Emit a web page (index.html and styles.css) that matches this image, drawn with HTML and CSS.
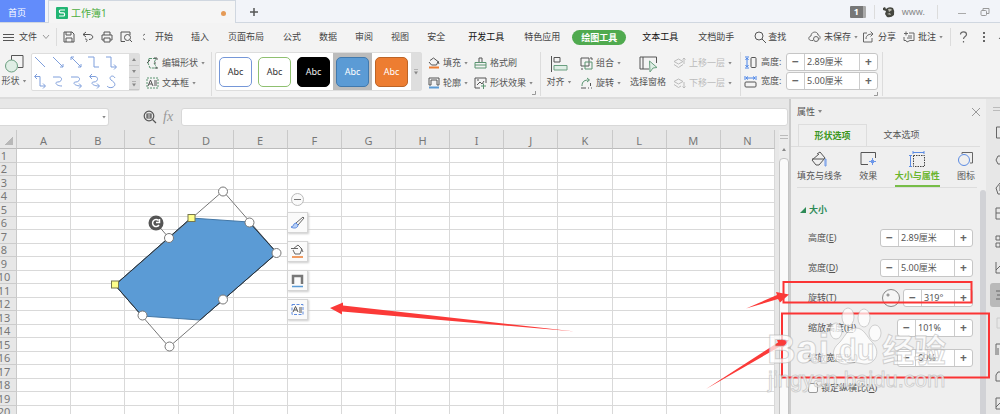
FILE: index.html
```
<!DOCTYPE html>
<html lang="zh-CN">
<head>
<meta charset="utf-8">
<title>工作簿1</title>
<link rel="stylesheet" href="styles.css">
</head>
<body>
<div class="app">
  <header class="titlebar">
    <button class="home-tab">首页</button>
    <div class="doc-tab">
      <svg class="logo" width="12" height="12" viewBox="0 0 12 12"><rect width="12" height="12" rx="1" fill="#22b573"/><path d="M9 3H4.6C3 3 3 5.8 4.6 5.8H7.4C9 5.8 9 9 7.4 9H3" fill="none" stroke="#fff" stroke-width="1.2"/></svg>
      <span>工作簿1</span><i class="dirty"></i>
    </div>
    <button class="new-tab" aria-label="新建"><svg width="10" height="10"><path d="M5 1V9M1 5H9" stroke="#555" stroke-width="1.5"/></svg></button>
    <div class="window-tools">
      <span class="count">1</span><i class="vline"></i>
      <svg width="12" height="12" viewBox="0 0 12 12"><path d="M0 2L2 1L3 3Q6 0 10 2Q12 5 11 9Q8 12 4 11L2 8L3 5L0 4Z" fill="#45463f"/><path d="M5 3Q8 2 9 4L6 6ZM4 8L7 7L8 9Z" fill="#b9b8ae"/></svg>
      <span class="user">www.</span><i class="vline"></i>
      <button aria-label="最小化"><svg width="8" height="10"><path d="M0 6.500H8" stroke="#aaa"/></svg></button>
      <button aria-label="还原"><svg width="10" height="10" fill="none" stroke="#999"><rect x="1" y="3.500" width="5.500" height="5" rx="1"/><path d="M3 3V1.500H9V6.500H7"/></svg></button>
    </div>
  </header>

  <nav class="menu">
    <button class="file"><svg width="11" height="9" stroke="#555"><path d="M0 1.500H11M0 4.500H11M0 7.500H11"/></svg>文件<svg width="8" height="6" fill="none" stroke="#999"><path d="M1 1L4 4.500L7 1"/></svg></button>
    <i class="vline"></i>
    <div class="quick">
      <button aria-label="保存"><svg width="12" height="12" fill="none" stroke="#555"><path d="M1 1H9L11 3V11H1ZM3 1V4H8V1M3 11V7H9V11"/></svg></button>
      <button aria-label="输出"><svg width="12" height="12" fill="none" stroke="#555"><path d="M1 3.500H7C12 3.500 12 8.500 7 8.500M4 1L1 3.500L4 6M4 11C6 9 5 8 3 8"/></svg></button>
      <button aria-label="打印"><svg width="12" height="12" fill="none" stroke="#555"><path d="M3 4V1H9V4M3 9H1V4H11V9H9M3 7H9V11H3Z"/></svg></button>
      <button aria-label="预览"><svg width="13" height="12" fill="none" stroke="#555"><path d="M5 10.500H1V1H10V4M10 9L12 11"/><circle cx="7.500" cy="6.500" r="3"/></svg></button>
    </div>
    <svg class="more" width="4" height="8" fill="none" stroke="#666"><path d="M3 1L1 2.500M3 7L1 5.500"/></svg>
    <div class="tabs">
      <a href="#">开始</a><a href="#">插入</a><a href="#" class="wide">页面布局</a><a href="#">公式</a><a href="#">数据</a><a href="#">审阅</a><a href="#">视图</a><a href="#">安全</a><a href="#" class="strong">开发工具</a><a href="#" class="wide">特色应用</a><a href="#" class="pill">绘图工具</a><a href="#" class="strong">文本工具</a><a href="#" class="wide">文档助手</a>
    </div>
    <button class="find"><svg width="12" height="12" fill="none" stroke="#555"><circle cx="5" cy="5" r="4"/><path d="M8 8L12 12"/></svg>查找</button>
    <div class="menu-right">
      <button><svg width="13" height="12" fill="none" stroke="#666"><path d="M5 9.500H3.500C0 9.500 0 5.500 3 5C3 0 10 0 10 4C12 4.500 13 7 11 8.500"/><circle cx="8" cy="8" r="2.500"/></svg>未保存<b class="caret"></b></button>
      <button><svg width="13" height="12" fill="none" stroke="#666"><path d="M5 2H1.500V11H10V7M4 8C4 4 7 3 11 3M8.500 0.500L11 3L8.500 5.500"/></svg>分享</button>
      <button><svg width="12" height="12" fill="none" stroke="#666"><path d="M6 2H11V9.500H7L4 11L3 9.500H1V6M4 7H9M5 5H9M1 2.500H5M3 .5V4.500"/></svg>批注<b class="caret"></b></button>
      <i class="vline"></i>
      <button aria-label="帮助"><svg width="9" height="12" fill="none" stroke="#666" stroke-width="1.200"><path d="M1.500 3.500C1.500 0 7.500 0 7.500 3.500C7.500 5.500 4.500 5.500 4.500 8M4.500 10V11.500"/></svg></button>
      <button aria-label="更多"><svg width="3" height="10" fill="#666"><path d="M0 0H2V2H0ZM0 4H2V6H0ZM0 8H2V10H0Z"/></svg></button>
      <button aria-label="收起"><svg width="8" height="6" fill="none" stroke="#666"><path d="M1 5L4.500 1L8 5"/></svg></button>
    </div>
  </nav>

  <section class="ribbon">
    <button class="tall shape-btn"><svg width="20" height="20" fill="none" stroke="#555"><path d="M7.500 7V1.500H19V13.500H14"/><circle cx="7.500" cy="12" r="6" fill="#dfeee5" stroke="#6a9f80"/></svg><span>形状<b class="caret"></b></span></button>
    <div class="lines">
      <svg width="96" height="36" fill="none" stroke="#7f9fdc"><path d="M3 3L13 13M21 3L31 13M28 13H31V10M39 3L49 13M39 6V3H42M46 13H49V10M56 3H62V13H67M74 3H79V13H84M82 10.500L84.500 13L82 15.500M5 20L2.500 22.500L5 25M3 22.500H8V32H13M11 29.500L13.500 32L11 34.500M21 23H27C31 23 30 28 26 28C22 28 24 32 30 32M39 23H45C49 23 48 28 44 28C40 28 42 32 49 32M47 29.500L49.500 32L47 34.500M60 20L57.500 22.500L60 25M58 22.500H63C67 23 66 28 62 28C58 28 60 32 67 32M65 29.500L67.500 32L65 34.500M83 24C81 20 76 23 79 26C84 29 84 32 80 33.500C77 34 76 33 75 32"/></svg>
      <div class="strip three"><i><b class="up"></b></i><i><b class="caret"></b></i><i><b class="caret lined"></b></i></div>
    </div>
    <div class="stack edit">
      <button><svg width="13" height="12" fill="none" stroke="#5a9470"><path d="M3 1.500H10L8 6L11 11H4L2 6Z" stroke-dasharray="3 1"/><path d="M1 6L4 3M8 1H11V3M8 6H10M9 11H12" stroke="#555"/></svg>编辑形状<b class="caret"></b></button>
      <button><svg width="13" height="12" fill="none" stroke="#5a9470"><rect x="1" y="1" width="11" height="10" stroke-dasharray="2 1"/><path d="M2 9L4.500 3L7 9M3 7H6M8 4H11M8 6H11M8 8H11" stroke="#555"/></svg>文本框<b class="caret"></b></button>
    </div>
    <i class="vline"></i>
    <div class="styles">
      <div class="cell"><button class="sw s1">Abc</button></div><div class="cell"><button class="sw s2">Abc</button></div><div class="cell"><button class="sw s3">Abc</button></div><div class="cell on"><button class="sw s4">Abc</button></div><div class="cell"><button class="sw s5">Abc</button></div>
      <div class="strip"><b class="caret lined"></b></div>
    </div>
    <div class="stack fill">
      <button><svg width="12" height="12" fill="none" stroke="#555"><path d="M2 3.500L5.500 1L10 4.500L8.500 8H3.500L1 5M10 4L11 7"/><path d="M1 10.500H11" stroke="#ed7d31" stroke-width="2"/></svg>填充<b class="caret"></b></button>
      <button><svg width="12" height="12" fill="none" stroke="#555"><path d="M1 8V1H11V8M3 8V3H9V8M1 8H3M9 8H11"/><path d="M1 10.500H11" stroke="#5b9bd5" stroke-width="2"/></svg>轮廓<b class="caret"></b></button>
    </div>
    <div class="stack effects">
      <button><svg width="13" height="12" fill="none" stroke="#5a9470"><path d="M5 5V1H8V5" stroke="#555"/><path d="M1 5.500H12V11H1ZM1 8H12"/></svg>格式刷</button>
      <button><svg width="13" height="12" fill="none" stroke="#555"><path d="M6 11H1V1H12V6M3 3H5M3 8L6 5L8 7L10 4"/><path d="M7 9H12M9.500 6.500V12" stroke="#5a9470"/></svg>形状效果<b class="caret"></b></button>
    </div>
    <svg class="corner" width="4" height="4"><path d="M0 3.500H3.500V0" fill="none" stroke="#999"/></svg>
    <i class="vline"></i>
    <button class="tall align"><svg width="18" height="18" fill="none" stroke="#555"><path d="M1.500 1V17M4 2.500H10V7H4Z"/><path d="M4 10.500H17V15H4Z" stroke="#6a9f80" fill="#dfeee5"/></svg><span>对齐<b class="caret"></b></span></button>
    <div class="stack group">
      <button><svg width="13" height="13" fill="none" stroke="#555"><path d="M1 1H9V9H1Z"/><path d="M5 5H12V12H5Z" stroke="#5a9470"/><path d="M1 12H3M10 1H12V3"/></svg>组合<b class="caret"></b></button>
      <button><svg width="13" height="13" fill="none" stroke="#5a9470"><path d="M2 9C2 4 5 3 9 3M7 1L9.500 3L7 5"/><path d="M1 11H6M8 11H9M11 11H12M10.500 6V9" stroke="#555"/></svg>旋转<b class="caret"></b></button>
    </div>
    <button class="tall select"><svg width="19" height="18" fill="none" stroke="#555"><path d="M10 14H1V2H17.500V8M4 2V14"/><path d="M10.500 6L18 12.500L14 13L11 17Z" stroke="#6a9f80" fill="#dfeee5"/></svg><span>选择窗格</span></button>
    <div class="stack order">
      <button disabled><svg width="13" height="12" fill="none" stroke="#bbb"><path d="M1 4.500L5.500 2L10 4.500L5.500 7ZM1 7.500L5.500 10.500L10 7.500M11 1V7M9.500 2.500L11 1L12.500 2.500"/></svg>上移一层<b class="caret"></b></button>
      <button disabled><svg width="13" height="12" fill="none" stroke="#bbb"><path d="M1 4.500L5.500 2L10 4.500L5.500 7ZM1 7.500L5.500 10.500L8 9M11 5V11M9.500 9.500L11 11L12.500 9.500"/></svg>下移一层<b class="caret"></b></button>
    </div>
    <i class="vline"></i>
    <div class="sizes">
      <label for="rh"><svg width="13" height="13" fill="none" stroke="#4a84e8"><path d="M1 1H5M1 12H5M3 2V11M1.500 4L3 2L4.500 4M1.500 9L3 11L4.500 9"/><rect x="7" y="1.500" width="5" height="10" rx="1" stroke="#555"/></svg>高度:</label>
      <div class="stepper"><button>−</button><input id="rh" value="2.89厘米"><button>+</button></div>
      <label for="rw"><svg width="13" height="13" fill="none" stroke="#4a84e8"><path d="M1 1V5M12 1V5M2 3H11M4 1.500L2 3L4 4.500M9 1.500L11 3L9 4.500"/><rect x="1" y="7" width="11" height="5" rx="1" stroke="#555"/></svg>宽度:</label>
      <div class="stepper"><button>−</button><input id="rw" value="5.00厘米"><button>+</button></div>
      <svg class="size-corner" width="4" height="4"><path d="M0 3.500H3.500V0" fill="none" stroke="#999"/></svg>
    </div>
    <i class="vline"></i>
  </section>

  <main class="work">
    <section class="book">
      <div class="formula">
        <div class="name"><input aria-label="名称框"><b class="caret"></b></div>
        <svg width="14" height="14" fill="none" stroke="#555" stroke-width="1.200"><circle cx="6" cy="6" r="4.800"/><path d="M9.500 9.500L13 13M4 4H8V8H4ZM4 6H8"/></svg>
        <i class="fx">fx</i>
        <input class="entry" aria-label="编辑栏">
      </div>
      <div class="sheet-wrap">
        <table class="sheet">
          <thead><tr id="heads"><th class="all"></th></tr></thead>
          <tbody id="rows"></tbody>
        </table>
        <div class="vscroll"><i class="split"></i><b class="up"></b><i class="thumb"></i></div>
      </div>
      <svg class="drawing" width="789" height="315" viewBox="0 99 789 315">
        <polygon points="191,218 249,222 277,253 200,320 142,316 115,285" fill="#5b9bd5" stroke="#4377a6"/>
        <path d="M223 191L277 253L169 347L115 285ZM156 223L169 238" fill="none" stroke="#777"/>
        <path d="M191 218L115 285L142 316M249 222L277 253L200 320" fill="none" stroke="#23313e"/>
        <g fill="#fff" stroke="#777"><circle cx="223" cy="191.500" r="4.500"/><circle cx="249.500" cy="222.500" r="4.500"/><circle cx="276.500" cy="253" r="4.500"/><circle cx="223" cy="299.500" r="4.500"/><circle cx="169.500" cy="346.500" r="4.500"/><circle cx="142.500" cy="315.500" r="4.500"/><circle cx="169" cy="238" r="4.500"/></g>
        <g fill="#ffff8c" stroke="#77774d"><rect x="188" y="214.500" width="7" height="7"/><rect x="111.500" y="281" width="7" height="7"/></g>
        <circle cx="156" cy="223" r="7.500" fill="#555"/><path d="M158.500 220.500A3.500 3.500 0 1 0 159 225M159.500 219V222.500H156" fill="none" stroke="#fff" stroke-width="1.500"/>
        <path d="M330 308L343 302.500V305.500L575 331.500L342 311.500V314.500Z" fill="#fb3a38"/>
      </svg>
      <div class="float">
        <button class="round" aria-label="收起"><svg width="7" height="3"><path d="M0 1.500H7" stroke="#777"/></svg></button>
        <button aria-label="样式"><svg width="15" height="15" fill="none"><path d="M6 8L13 2L14 3L8 10Z" stroke="#666"/><path d="M6 8C3 8 4 12 1 12C4 14 8 13 8 10Z" fill="#b9d0f5" stroke="#5c8be0"/></svg></button>
        <button aria-label="填充"><svg width="15" height="15" fill="none" stroke="#666"><path d="M1 4.500H8M3 5L8 1L12 5L10 10H5L3 6M11 4L13 8"/><path d="M2 13H13" stroke="#ed7d31" stroke-width="1.500"/></svg></button>
        <button aria-label="轮廓"><svg width="15" height="15" fill="none"><path d="M3 11V3H12V11" stroke="#777" stroke-width="2.500"/><path d="M2 13.500H13" stroke="#5b9bd5" stroke-width="1.500"/></svg></button>
        <button aria-label="文字"><svg width="15" height="15" fill="none" stroke="#5c8be0"><rect x="2" y="2.500" width="11" height="10" stroke-dasharray="3 1.500"/><path d="M3 10L5.500 4.500L8 10M4 8H7M9 6H12M9 8H12M9 10H12" stroke="#555"/></svg></button>
      </div>
    </section>

    <aside class="panel">
      <div class="panel-title"><span>属性<b class="caret"></b></span><button aria-label="关闭"><svg width="8" height="8" stroke="#999"><path d="M0 0L8 8M8 0L0 8"/></svg></button></div>
      <div class="panel-tabs"><button class="on">形状选项</button><button>文本选项</button></div>
      <div class="kinds">
        <button><svg width="17" height="17" fill="none" stroke="#555"><path d="M6 3L9 1L14 7L8 14H5L1 9L8 3M1 8H13"/><path d="M14 8H15V15H14Z" stroke="#6d97e8"/></svg>填充与线条</button>
        <button><svg width="17" height="17" fill="none" stroke="#555"><path d="M8 13.500H1V1.500H15.500V7"/><path d="M12.500 7V14M9 10.500H16M11 9L14 12M14 9L11 12" stroke="#6d97e8"/></svg>效果</button>
        <button class="on"><svg width="17" height="17" fill="none" stroke="#5b8be3"><path d="M4 1.500H15M4 0V3M15 0V3M1.500 4V15M0 4.500H3M0 15.500H3"/><rect x="4.500" y="4.500" width="11" height="11" stroke="#444" stroke-dasharray="1.500 1"/></svg>大小与属性</button>
        <button><svg width="17" height="17" fill="none"><path d="M5 3V1.500H15.500V12H13" stroke="#666"/><circle cx="7" cy="9" r="5.500" stroke="#5b8be3"/></svg>图标</button>
      </div>
      <h2><svg width="6" height="6"><path d="M6 0V6H0Z" fill="#2e8b57"/></svg>大小</h2>
      <div class="row"><label for="ph">高度(<u>E</u>)</label><div class="stepper"><button>−</button><input id="ph" value="2.89厘米"><button>+</button></div></div>
      <div class="row"><label for="pw">宽度(<u>D</u>)</label><div class="stepper"><button>−</button><input id="pw" value="5.00厘米"><button>+</button></div></div>
      <div class="row"><label for="pr">旋转(<u>T</u>)</label><i class="dial"></i><div class="stepper turn"><button>−</button><input id="pr" value="319°"><button>+</button></div></div>
      <div class="row"><label for="sh">缩放高度(<u>H</u>)</label><div class="stepper scale"><button>−</button><input id="sh" value="101%"><button>+</button></div></div>
      <div class="row"><label for="sw">缩放宽度(<u>W</u>)</label><div class="stepper scale"><button>−</button><input id="sw" value="69%"><button>+</button></div></div>
      <div class="row check"><input type="checkbox" id="lock"><label for="lock">锁定纵横比(<u>A</u>)</label></div>
      <i class="pscroll"></i>
    </aside>
    <aside class="dock">
      <svg width="14" height="315" viewBox="0 0 14 315" fill="none" stroke="#777"><path d="M7 8.500H14M7 11.500H14" stroke="#bbb"/><rect x="4" y="184" width="14" height="24" rx="3" fill="#b9b9b9" stroke="none"/><path d="M14 28H10.500V39H14M14 57H12L10 61L12 65H14M14 84L10 89L12 95H14M14 86V92M10 109H14M10 120H14M10 109V120M10 114H14M10 137H14V141H10ZM10 144H14V148H10ZM10 163V174H14M10 171L14 167M10 192H14M10 200H14M11 196H14M10 245H14M10 245V256M12 249V256M14 273H12L10 276V282H14M10 299H14M10 299V310H14M10 308L14 304" stroke="#666"/><path d="M11 219H14M11 219V229H14" stroke="#ccc"/></svg>
    </aside>
    <svg class="notes" width="330" height="315" viewBox="670 99 330 315">
      <rect x="783.500" y="282" width="188" height="20.500" fill="none" stroke="#fb3434" stroke-width="2"/>
      <rect x="782" y="313.500" width="207" height="64" fill="none" stroke="#fb3434" stroke-width="2"/>
      <g fill="#fb3a38"><path d="M746 308.500L777 295L776 292L789 294.500L780 302.500L778 299Z"/><path d="M706 389L778 342.500L777 340L789 340L782 349L780 346.500Z"/></g>
      <g class="mark">
        <text x="767" y="363" class="brand">Bai</text>
        <ellipse cx="836" cy="331" rx="6" ry="8"/><ellipse cx="848" cy="317" rx="6" ry="9"/><ellipse cx="864" cy="318" rx="6" ry="9"/><ellipse cx="875" cy="333" rx="6" ry="8"/>
        <path d="M856 328C864 328 867 337 872 342C882 352 875 365 864 364Q855 361 847 364C834 365 829 352 838 344C844 339 847 328 856 328Z"/>
        <text x="839" y="360" class="du">du</text>
        <text x="882" y="362" class="cn">经验</text>
        <text x="768" y="387" class="site">jingyan.baidu.com</text>
      </g>
    </svg>
  </main>
</div>
<script src="sheet.js"></script>
</body>
</html>
```
FILE: styles.css
```
* { box-sizing: border-box; }
body { margin: 0; background: #f3f3f3; color: #555; font: 9px/12px "Noto Sans", "Noto Sans CJK SC", sans-serif; overflow: hidden; }
button, input { font: inherit; color: inherit; border: 0; background: none; padding: 0; margin: 0; min-width: 0; white-space: nowrap; }
button { display: flex; align-items: center; justify-content: center; }
a { color: inherit; text-decoration: none; }
svg { flex: none; display: block; }
.app { display: flex; flex-direction: column; height: 100vh; }
.vline { flex: none; width: 1px; align-self: stretch; background: #dcdcdc; }
.caret { flex: none; width: 4px; height: 3px; background: #888; clip-path: polygon(0 0, 100% 0, 50% 100%); display: inline-block; }
.up { width: 4px; height: 3px; background: #888; clip-path: polygon(50% 0, 100% 100%, 0 100%); }
.caret.lined { height: 6px; clip-path: polygon(0 0, 100% 0, 100% 16%, 0 16%, 0 50%, 100% 50%, 50% 100%, 0 50%); }

.titlebar { display: flex; flex: none; height: 23px; background: #f2f4f9; border-bottom: 1px solid #d0d7e0; }
.home-tab { width: 45px; background: #628cfb; color: #fff; padding: 3px 11px 0 0; }
.doc-tab { display: flex; align-items: center; width: 188px; height: 23px; margin-left: 3px; padding: 2px 9px 0 7px; gap: 3px; color: #4ead42; background: #f5f5f5; border: 1px solid #d0d7e0; border-bottom: 0; font-size: 10px; }
.dirty { width: 5px; height: 5px; border-radius: 50%; background: #e59a56; margin-left: auto; }
.new-tab { width: 35px; padding-top: 2px; }
.window-tools { display: flex; align-items: center; margin-left: auto; padding: 2px 10px 0 0; color: #888; }
.window-tools .vline { margin: 3px 8px; }
.window-tools .user { margin-left: 7px; font-size: 9px; }
.window-tools .vline:nth-of-type(2) { margin: 3px 20px 3px 12px; }
.window-tools button + button { margin-left: 14px; }
.count { width: 16px; background: #777; color: #fff; border-radius: 1px; text-align: center; font-weight: bold; border-right: 3px solid #aaa; }

.menu { display: flex; flex: none; align-items: center; height: 28px; padding-left: 3px; color: #444; }
.menu .vline { margin: 5px 0; }
.file { gap: 5px; margin-right: 6px; }
.quick { display: flex; gap: 7px; margin: 0 9px 0 6px; }
.tabs { display: flex; align-items: center; }
.tabs a { padding: 0 9px; }
.tabs .strong { color: #111; padding: 0 10px; margin-left: 4px; }
.tabs .wide { padding: 0 10px; }
.tabs .pill { background: #50aa4f; color: #fff; font-weight: bold; border-radius: 8px; line-height: 15px; margin: 0 2px; }
.find { gap: 2px; margin-left: 10px; }
.menu-right { display: flex; align-items: center; align-self: stretch; margin-left: auto; }
.menu-right button { gap: 3px; margin-right: 7px; }
.menu-right button:first-child { margin-right: 4px; }
.menu-right .vline + button { margin: 0 15px 0 8px; }
.menu-right button:last-child { margin: 0 -6px 0 5px; }

.ribbon { display: flex; flex: none; height: 48px; padding: 1px 0; color: #555; border-bottom: 2px solid #dcdcdc; }
.tall { flex-direction: column; justify-content: flex-start; padding-top: 3px; gap: 3px; }
.tall span { display: flex; align-items: center; gap: 3px; }
.shape-btn { width: 28px; padding-top: 2px; gap: 1px; }
.lines, .styles { display: flex; border: 1px solid #ddd; border-radius: 2px; background: #fff; }
.lines { width: 109px; height: 38px; margin: 1px 6px 0 3px; }
.strip { width: 10px; margin-left: auto; background: #dedede; display: flex; flex-direction: column; align-items: center; justify-content: center; }
.strip i { flex: 1; width: 10px; display: flex; align-items: center; justify-content: center; border-bottom: 1px solid #c8c8c8; }
.stack { display: flex; flex-direction: column; gap: 4px; padding-top: 3px; align-items: flex-start; }
.stack button { height: 16px; gap: 3px; }
.stack button:disabled { color: #bbb; }
.edit { width: 65px; }
.styles { width: 207px; height: 39px; margin: 0 6px 0 3px; }
.cell { width: 39px; padding: 4px 3px; }
.cell.on { background: #bcbcbc; }
.sw { width: 33px; height: 30px; border-radius: 5px; border: 1px solid; color: #333; background: #fff; }
.s1 { border-color: #7597d8; } .s2 { border-color: #8fc070; }
.s3 { background: #000; border-color: #000; color: #eee; }
.s4 { background: #5b9bd5; border-color: #4179ad; color: #fff; }
.s5 { background: #ed7d31; border-color: #bc6427; color: #fff; }
.fill { width: 46px; }
.effects { width: 58px; }
.corner { align-self: flex-end; margin: 0 4px 20px 0; }
.ribbon .corner { margin-bottom: 1px; }
.align { width: 24px; margin: 0 9px 0 6px; }
.group { width: 49px; }
.select { width: 38px; }
.order { margin: 0 8px 0 6px; }
.sizes { display: grid; grid-template-columns: 38px 92px; gap: 1px 4px; align-content: start; padding: 1px 4px 0 3px; }
.sizes label { display: flex; align-items: center; gap: 4px; }
.size-corner { grid-column: 2; justify-self: end; margin-top: 1px; }
.stepper { display: flex; width: 93px; height: 18px; background: #fff; border: 1px solid #c6c6c6; border-radius: 3px; }
.sizes .stepper { width: 92px; }
.stepper button { flex: none; width: 17px; font-size: 12px; font-weight: bold; color: #666; }
.stepper input { flex: 1; width: 0; border: solid #ccc; border-width: 0 1px; padding-left: 2px; font-size: 9px; outline: 0; }

.work { display: flex; flex: 1; min-height: 0; position: relative; background: #e7e7e7; overflow: hidden; }
.book { flex: 1; min-width: 0; position: relative; overflow: hidden; }
.formula { display: flex; align-items: center; padding: 9px 1px 4px 0; }
.name { display: flex; align-items: center; width: 109px; height: 18px; margin-right: 34px; padding-right: 2px; background: #fff; border: 1px solid #d8d8d8; border-left: 0; border-radius: 0 3px 3px 0; }
.name input { flex: 1; }
.fx { width: 24px; padding-left: 6px; font: italic 14px/14px "Liberation Serif", serif; color: #999; }
.entry { flex: 1; height: 18px; background: #fff; border: 1px solid #d8d8d8; border-radius: 3px; }
.sheet-wrap { display: flex; }
.sheet { flex: 1; table-layout: fixed; border-collapse: separate; border-spacing: 0; width: 0; background: #fff; margin-right: 4px; font-size: 11px; line-height: 12px; color: #777; }
.sheet th { font-weight: normal; padding: 0; background: #e7e7e7; border-right: 1px solid #c9c9c9; }
.sheet thead th { height: 19px; padding-top: 4px; border-bottom: 1px solid #bbb; }
.sheet .all { width: 17px; background: linear-gradient(135deg, #e7e7e7 50%, #b8b8b8 50%) 5px 7px / 8px 8px no-repeat #e7e7e7; }
.sheet tbody th { border-bottom: 1px solid #ccc; }
.sheet tbody th span { display: flex; justify-content: center; width: 8px; }
.sheet td { height: 14px; padding: 0; border: solid #d9d9d9; border-width: 0 1px 1px 0; }
.sheet tbody tr:nth-child(even) td { height: 13px; }
.vscroll { display: flex; flex-direction: column; align-items: center; width: 10px; padding-top: 5px; background: #ececec; }
.split { width: 8px; height: 4px; border: solid #bbb; border-width: 1px 0; margin-bottom: 9px; }
.thumb { flex: 1; width: 10px; margin-top: 7px; background: #fafafa; border: 1px solid #c3c3c3; border-radius: 4px 4px 0 0; }
.drawing, .notes { position: absolute; top: 0; left: 0; pointer-events: none; }
.notes { left: auto; right: 0; }
.float { position: absolute; left: 287px; top: 94px; display: flex; flex-direction: column; align-items: center; gap: 8px; }
.float button { width: 21px; height: 21px; background: #fafafa; border: 1px solid #d5d5d5; box-shadow: 1px 1px 2px #ccc; }
.float .round { width: 13px; height: 13px; border-radius: 50%; border-color: #bbb; box-shadow: none; margin-bottom: -2px; }

.panel { width: 197px; flex: none; background: #efefef; border-left: 2px solid #ccc; padding: 6px 13px 0 6px; position: relative; }
.panel-title { display: flex; justify-content: space-between; align-items: center; height: 19px; margin-right: -14px; padding-right: 7px; padding-bottom: 6px; }
.panel-title span { display: flex; align-items: center; gap: 3px; }
.panel-tabs { display: flex; border-bottom: 1px solid #ddd; margin: 0 -7px 0 -6px; padding-left: 7px; }
.panel-tabs button { width: 69px; height: 22px; }
.panel-tabs .on { color: #3c9721; font-weight: bold; border: 1px solid #ddd; border-bottom: 0; }
.kinds { display: flex; justify-content: space-between; margin-right: -4px; border-bottom: 1px solid #ddd; padding: 4px 2px 0 0; }
.kinds button { flex-direction: column; gap: 2px; padding-bottom: 3px; border-bottom: 2px solid transparent; }
.kinds .on { color: #69b52d; font-weight: bold; border-color: #77bd48; }
.panel h2 { display: flex; align-items: center; gap: 3px; margin: 15px 0 6px 3px; font-size: 9px; line-height: 14px; color: #2e8b57; }
.row { display: flex; align-items: center; height: 30px; margin-left: 11px; }
.row label { margin-right: auto; }
.turn { width: 70px; }
.scale { width: 76px; }
.dial { width: 18px; height: 18px; margin-right: 3px; border: 1px solid #888; border-radius: 50%; background: radial-gradient(circle at 5px 5px, #999 1px, #f5f5f5 2px); }
.row.check { gap: 3px; }
.row.check input { appearance: none; width: 10px; height: 10px; border: 1px solid #999; border-radius: 2px; background: #fafafa; }
.pscroll { position: absolute; right: 0; top: 91px; bottom: 0; width: 6px; background: #d1d2d6; border-radius: 3px 3px 0 0; }
.dock { flex: none; width: 14px; }
.mark { fill: #fff; fill-opacity: .72; stroke: #aaa; stroke-opacity: .5; stroke-width: 1; }
.mark .brand { font: bold 40px "Liberation Sans", sans-serif; }
.mark .du { font: bold 29px "Liberation Sans", sans-serif; }
.mark .cn { font: bold 32px "Noto Sans CJK SC", sans-serif; }
.mark .site { font: 22px "Liberation Sans", sans-serif; }
```
FILE: sheet.js
```
const letters = "ABCDEFGHIJKLMN";
const heads = document.getElementById("heads");
for (const letter of letters) {
  const th = document.createElement("th");
  th.textContent = letter;
  heads.append(th);
}
const rows = document.getElementById("rows");
for (let n = 1; n <= 20; n++) {
  const tr = document.createElement("tr");
  tr.innerHTML = `<th><span>${n}</span></th>` + "<td></td>".repeat(letters.length);
  rows.append(tr);
}
```
